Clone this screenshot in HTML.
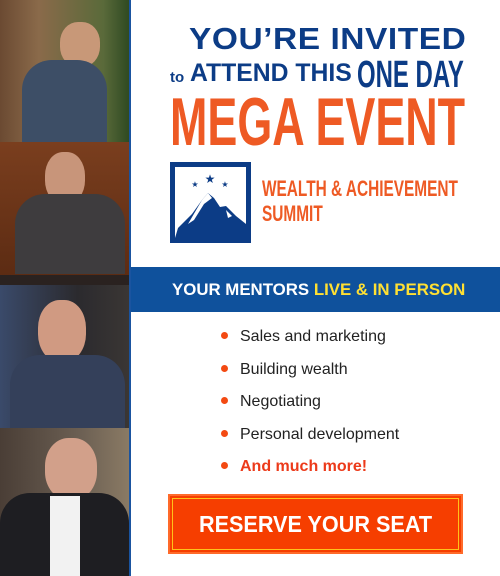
<!DOCTYPE html>
<html><head><meta charset="utf-8"><style>
*{margin:0;padding:0;box-sizing:border-box}
body{width:500px;height:576px;overflow:hidden;background:#fff;font-family:"Liberation Sans",sans-serif;position:relative}
.a{position:absolute}
.ph{position:absolute;left:0;width:129px;overflow:hidden}
.t{position:absolute;white-space:nowrap;transform-origin:0 0;font-weight:bold}
</style></head><body>
<div class="ph" style="top:0;height:142px;background:linear-gradient(90deg,#6b4a32 0%,#8a6a4a 30%,#5a6a3a 80%,#2f4a22 100%)">
 <div class="a" style="left:60px;top:22px;width:40px;height:45px;border-radius:45%;background:#c89878"></div>
 <div class="a" style="left:22px;top:60px;width:85px;height:85px;border-radius:30px 30px 0 0;background:#3d4e66"></div>
</div>
<div class="ph" style="top:142px;height:143px;background:linear-gradient(#7a3e1e,#5a2a12)">
 <div class="a" style="left:45px;top:10px;width:40px;height:52px;border-radius:45%;background:#c8957a"></div>
 <div class="a" style="left:15px;top:52px;width:110px;height:80px;border-radius:30px 30px 0 0;background:#3e3c3e"></div>
 <div class="a" style="left:0;top:133px;width:129px;height:10px;background:#2a2220"></div>
</div>
<div class="ph" style="top:285px;height:143px;background:linear-gradient(90deg,#3a4a6a,#2b2a2e 60%,#3a3634)">
 <div class="a" style="left:38px;top:15px;width:48px;height:62px;border-radius:45%;background:#d09a82"></div>
 <div class="a" style="left:10px;top:70px;width:115px;height:80px;border-radius:30px 30px 0 0;background:#34405a"></div>
</div>
<div class="ph" style="top:428px;height:148px;background:linear-gradient(90deg,#4a3e36,#6a5e52 60%,#8a7a64)">
 <div class="a" style="left:45px;top:10px;width:52px;height:62px;border-radius:45%;background:#d2a08a"></div>
 <div class="a" style="left:0;top:65px;width:129px;height:90px;border-radius:30px 30px 0 0;background:#1e1e22"></div>
 <div class="a" style="left:50px;top:68px;width:30px;height:90px;background:#f2f2f2"></div>
</div>
<div class="a" style="left:129px;top:0;width:2px;height:576px;background:#1a54a0"></div>

<div class="t" style="left:189px;top:21px;font-size:31px;color:#0c3c86;letter-spacing:0.5px;transform:scaleX(1.08)">YOU’RE INVITED</div>
<div class="t" style="left:170px;top:69px;font-size:15px;color:#0c3c86">to</div>
<div class="t" style="left:190px;top:59px;font-size:25px;color:#0c3c86;transform:scaleX(0.99)">ATTEND THIS</div>
<div class="t" style="left:357px;top:54px;font-size:38px;color:#0c3c86;transform:scaleX(0.63)">ONE DAY</div>
<div class="t" style="left:170px;top:88px;font-size:68px;color:#ee5a24;line-height:1;transform:scaleX(0.66)">MEGA EVENT</div>

<svg class="a" style="left:170px;top:162px" width="81" height="81" viewBox="0 0 81 81">
 <rect width="81" height="81" fill="#0c3c86"/>
 <rect x="5" y="5" width="71" height="71" fill="#fff"/>
 <path d="M5 76 L8 66 L22 52 L32 38 L38 31 L44 36 L50 45 L56 44 L66 54 L76 62 L76 76 Z" fill="#0c3c86"/>
 <path d="M32 38 L38 31 L42 36 L34 42 L24 58 L18 62 Z" fill="#fff"/>
 <path d="M56 48 L62 54 L58 56 Z" fill="#fff"/>
 <text x="40" y="21" font-size="12" fill="#0c3c86" text-anchor="middle">★</text>
 <text x="25" y="25" font-size="8" fill="#0c3c86" text-anchor="middle">★</text>
 <text x="55" y="25" font-size="8" fill="#0c3c86" text-anchor="middle">★</text>
</svg>
<div class="t" style="left:262px;top:178px;font-size:22px;color:#ee5a24;line-height:1;transform:scaleX(0.7)">WEALTH &amp; ACHIEVEMENT</div>
<div class="t" style="left:262px;top:203px;font-size:22px;color:#ee5a24;line-height:1;transform:scaleX(0.7)">SUMMIT</div>

<div class="a" style="left:131px;top:267px;width:369px;height:45px;background:#0f519c"></div>
<div class="t" style="left:172px;top:280px;font-size:17px;color:#fff;transform:scaleX(0.99)">YOUR MENTORS <span style="color:#ffe033">LIVE &amp; IN PERSON</span></div>

<div class="a" style="left:221px;top:0;font-size:16px;color:#222;line-height:32.5px;padding-top:321px">
 <div><span style="display:inline-block;width:7px;height:7px;border-radius:50%;background:#f34a12;margin-right:12px;vertical-align:2px"></span>Sales and marketing</div>
 <div><span style="display:inline-block;width:7px;height:7px;border-radius:50%;background:#f34a12;margin-right:12px;vertical-align:2px"></span>Building wealth</div>
 <div><span style="display:inline-block;width:7px;height:7px;border-radius:50%;background:#f34a12;margin-right:12px;vertical-align:2px"></span>Negotiating</div>
 <div><span style="display:inline-block;width:7px;height:7px;border-radius:50%;background:#f34a12;margin-right:12px;vertical-align:2px"></span>Personal development</div>
 <div style="color:#ec3a1a;font-weight:bold"><span style="display:inline-block;width:7px;height:7px;border-radius:50%;background:#f34a12;margin-right:12px;vertical-align:2px"></span>And much more!</div>
</div>

<div class="a" style="left:168px;top:494px;width:295px;height:60px;background:#f63e00;border:2px solid #ff6a2a">
 <div class="a" style="left:2px;top:2px;right:2px;bottom:2px;border:1.5px solid #ffc21a"></div>
 <div class="a" style="left:0;right:0;top:15px;text-align:center;font-size:23px;font-weight:bold;color:#fff;transform:scaleX(0.94)">RESERVE YOUR SEAT</div>
</div>
</body></html>
